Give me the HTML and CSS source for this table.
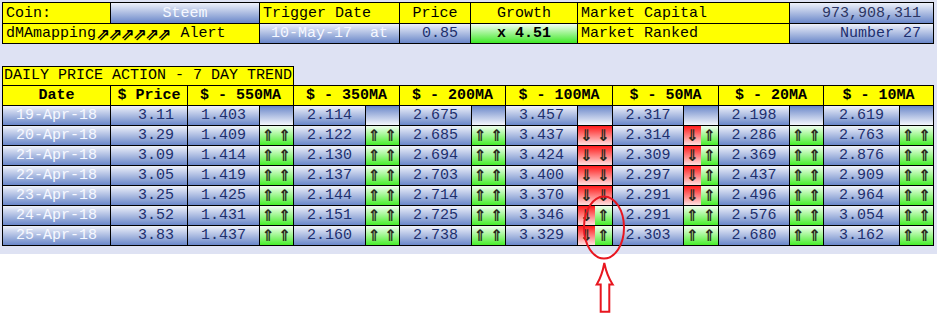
FILE: index.html
```html
<!DOCTYPE html>
<html>
<head>
<meta charset="utf-8">
<title>dMAmapping Alert - Steem</title>
<link rel="stylesheet" href="styles.css">
</head>
<body>
<div class="page">
  <div class="summary">
    <div class="cell yellow left">Coin:</div>
    <div class="cell blue light center">Steem</div>
    <div class="cell yellow left">Trigger Date</div>
    <div class="cell yellow center">Price</div>
    <div class="cell yellow center">Growth</div>
    <div class="cell yellow left">Market Capital</div>
    <div class="cell blue dark right">973,908,311</div>
    <div class="cell yellow left span2">dMAmapping<span class="sym">⇗⇗⇗⇗⇗⇗</span> Alert</div>
    <div class="cell blue light center">10-May-17  at</div>
    <div class="cell blue navy right">0.85</div>
    <div class="cell green center bold">x 4.51</div>
    <div class="cell yellow left">Market Ranked</div>
    <div class="cell blue navy right">Number 27</div>
  </div>

  <div class="title">DAILY PRICE ACTION - 7 DAY TREND</div>

  <div class="trend">
    <div class="cell yellow center bold">Date</div>
    <div class="cell yellow center bold">$ Price</div>
    <div class="cell yellow center bold span2">$ - 550MA</div>
    <div class="cell yellow center bold span2">$ - 350MA</div>
    <div class="cell yellow center bold span2">$ - 200MA</div>
    <div class="cell yellow center bold span2">$ - 100MA</div>
    <div class="cell yellow center bold span2">$ - 50MA</div>
    <div class="cell yellow center bold span2">$ - 20MA</div>
    <div class="cell yellow center bold span2">$ - 10MA</div>

    <div class="cell blue light center">19-Apr-18</div>
    <div class="cell blue navy price">3.11</div>
    <div class="cell blue navy center">1.403</div><div class="arr none"></div>
    <div class="cell blue navy center">2.114</div><div class="arr none"></div>
    <div class="cell blue navy center">2.675</div><div class="arr none"></div>
    <div class="cell blue navy center">3.457</div><div class="arr none"></div>
    <div class="cell blue navy center">2.317</div><div class="arr none"></div>
    <div class="cell blue navy center">2.198</div><div class="arr none"></div>
    <div class="cell blue navy center">2.619</div><div class="arr none"></div>

    <div class="cell blue light center">20-Apr-18</div>
    <div class="cell blue navy price">3.29</div>
    <div class="cell blue navy center">1.409</div><div class="arr"><span class="up">⇑</span><span class="up">⇑</span></div>
    <div class="cell blue navy center">2.122</div><div class="arr"><span class="up">⇑</span><span class="up">⇑</span></div>
    <div class="cell blue navy center">2.685</div><div class="arr"><span class="up">⇑</span><span class="up">⇑</span></div>
    <div class="cell blue navy center">3.437</div><div class="arr"><span class="dn">⇓</span><span class="dn">⇓</span></div>
    <div class="cell blue navy center">2.314</div><div class="arr"><span class="dn">⇓</span><span class="up">⇑</span></div>
    <div class="cell blue navy center">2.286</div><div class="arr"><span class="up">⇑</span><span class="up">⇑</span></div>
    <div class="cell blue navy center">2.763</div><div class="arr"><span class="up">⇑</span><span class="up">⇑</span></div>

    <div class="cell blue light center">21-Apr-18</div>
    <div class="cell blue navy price">3.09</div>
    <div class="cell blue navy center">1.414</div><div class="arr"><span class="up">⇑</span><span class="up">⇑</span></div>
    <div class="cell blue navy center">2.130</div><div class="arr"><span class="up">⇑</span><span class="up">⇑</span></div>
    <div class="cell blue navy center">2.694</div><div class="arr"><span class="up">⇑</span><span class="up">⇑</span></div>
    <div class="cell blue navy center">3.424</div><div class="arr"><span class="dn">⇓</span><span class="dn">⇓</span></div>
    <div class="cell blue navy center">2.309</div><div class="arr"><span class="dn">⇓</span><span class="up">⇑</span></div>
    <div class="cell blue navy center">2.369</div><div class="arr"><span class="up">⇑</span><span class="up">⇑</span></div>
    <div class="cell blue navy center">2.876</div><div class="arr"><span class="up">⇑</span><span class="up">⇑</span></div>

    <div class="cell blue light center">22-Apr-18</div>
    <div class="cell blue navy price">3.05</div>
    <div class="cell blue navy center">1.419</div><div class="arr"><span class="up">⇑</span><span class="up">⇑</span></div>
    <div class="cell blue navy center">2.137</div><div class="arr"><span class="up">⇑</span><span class="up">⇑</span></div>
    <div class="cell blue navy center">2.703</div><div class="arr"><span class="up">⇑</span><span class="up">⇑</span></div>
    <div class="cell blue navy center">3.400</div><div class="arr"><span class="dn">⇓</span><span class="dn">⇓</span></div>
    <div class="cell blue navy center">2.297</div><div class="arr"><span class="dn">⇓</span><span class="up">⇑</span></div>
    <div class="cell blue navy center">2.437</div><div class="arr"><span class="up">⇑</span><span class="up">⇑</span></div>
    <div class="cell blue navy center">2.909</div><div class="arr"><span class="up">⇑</span><span class="up">⇑</span></div>

    <div class="cell blue light center">23-Apr-18</div>
    <div class="cell blue navy price">3.25</div>
    <div class="cell blue navy center">1.425</div><div class="arr"><span class="up">⇑</span><span class="up">⇑</span></div>
    <div class="cell blue navy center">2.144</div><div class="arr"><span class="up">⇑</span><span class="up">⇑</span></div>
    <div class="cell blue navy center">2.714</div><div class="arr"><span class="up">⇑</span><span class="up">⇑</span></div>
    <div class="cell blue navy center">3.370</div><div class="arr"><span class="dn">⇓</span><span class="dn">⇓</span></div>
    <div class="cell blue navy center">2.291</div><div class="arr"><span class="dn">⇓</span><span class="up">⇑</span></div>
    <div class="cell blue navy center">2.496</div><div class="arr"><span class="up">⇑</span><span class="up">⇑</span></div>
    <div class="cell blue navy center">2.964</div><div class="arr"><span class="up">⇑</span><span class="up">⇑</span></div>

    <div class="cell blue light center">24-Apr-18</div>
    <div class="cell blue navy price">3.52</div>
    <div class="cell blue navy center">1.431</div><div class="arr"><span class="up">⇑</span><span class="up">⇑</span></div>
    <div class="cell blue navy center">2.151</div><div class="arr"><span class="up">⇑</span><span class="up">⇑</span></div>
    <div class="cell blue navy center">2.725</div><div class="arr"><span class="up">⇑</span><span class="up">⇑</span></div>
    <div class="cell blue navy center">3.346</div><div class="arr"><span class="dn">⇓</span><span class="up">⇑</span></div>
    <div class="cell blue navy center">2.291</div><div class="arr"><span class="up">⇑</span><span class="up">⇑</span></div>
    <div class="cell blue navy center">2.576</div><div class="arr"><span class="up">⇑</span><span class="up">⇑</span></div>
    <div class="cell blue navy center">3.054</div><div class="arr"><span class="up">⇑</span><span class="up">⇑</span></div>

    <div class="cell blue light center">25-Apr-18</div>
    <div class="cell blue navy price">3.83</div>
    <div class="cell blue navy center">1.437</div><div class="arr"><span class="up">⇑</span><span class="up">⇑</span></div>
    <div class="cell blue navy center">2.160</div><div class="arr"><span class="up">⇑</span><span class="up">⇑</span></div>
    <div class="cell blue navy center">2.738</div><div class="arr"><span class="up">⇑</span><span class="up">⇑</span></div>
    <div class="cell blue navy center">3.329</div><div class="arr"><span class="dn">⇓</span><span class="up">⇑</span></div>
    <div class="cell blue navy center">2.303</div><div class="arr"><span class="up">⇑</span><span class="up">⇑</span></div>
    <div class="cell blue navy center">2.680</div><div class="arr"><span class="up">⇑</span><span class="up">⇑</span></div>
    <div class="cell blue navy center">3.162</div><div class="arr"><span class="up">⇑</span><span class="up">⇑</span></div>
  </div>
</div>

<svg class="annotation" viewBox="0 0 938 320" aria-hidden="true">
  <ellipse cx="604" cy="227.5" rx="20" ry="31" fill="none" stroke="#e8161f" stroke-width="2"/>
  <path d="M604.3 263 Q607 276 612.7 284.5 L609.3 284.5 L609.3 311.7 L600.7 311.7 L600.7 284.5 L596.7 284.5 Q602 276 604.3 263 Z" fill="none" stroke="#e8161f" stroke-width="2" stroke-linejoin="miter"/>
</svg>
</body>
</html>
```

FILE: styles.css
```css
html, body {
  margin: 0;
  padding: 0;
  background: #ffffff;
}

body {
  position: relative;
  min-height: 320px;
  font-family: "Liberation Mono", "Courier New", "DejaVu Sans Mono", monospace;
  font-size: 15px;
  color: #000;
}

.page {
  width: 937px;
  box-sizing: border-box;
  padding: 2px 0 8px 2px;
  background: #dee2f3;
}

.summary {
  display: grid;
  width: max-content;
  background: #000;
  padding: 1px;
  gap: 1px;
  grid-template-columns: 107px 148px 139px 70px 106px 211px 143px;
  grid-template-rows: 20px 19px;
}

.title {
  margin-top: 22px;
  width: 292px;
  height: 19px;
  box-sizing: border-box;
  border: 1px solid #000;
  border-bottom: 0;
  background: #ffff00;
  padding-left: 1px;
  line-height: 18px;
  white-space: pre;
}

.trend {
  display: grid;
  width: max-content;
  background: #000;
  padding: 1px;
  gap: 1px;
  grid-template-columns: 107px 76px 71px 33px 71px 33px 71px 33px 71px 34px 70px 34px 70px 33px 75px 33px;
  grid-auto-rows: 19px;
}

.cell {
  display: flex;
  align-items: center;
  white-space: pre;
  overflow: hidden;
  padding: 0 3px;
}

.span2 { grid-column: span 2; }

.left { justify-content: flex-start; }
.center { justify-content: center; padding: 0; }
.right { justify-content: flex-end; padding-right: 12px; }
.price { justify-content: flex-end; padding-right: 13px; }
.bold { font-weight: bold; }

.yellow { background: #ffff00; color: #000; }
.blue { background: linear-gradient(#eef1fa, #6a87c9); }
.green { background: linear-gradient(#f4fff2, #3fe826); }

.light { color: #f6f8ff; }
.navy { color: #1d2f6e; }
.dark { color: #2c3563; }

.sym {
  font-family: "DejaVu Sans", sans-serif;
  font-size: 17px;
  font-weight: bold;
  letter-spacing: -2px;
  margin-right: 2px;
}

.arr {
  display: flex;
}

.arr span {
  flex: 1;
  display: flex;
  align-items: center;
  justify-content: center;
  font-family: "DejaVu Sans", sans-serif;
  font-size: 16px;
  font-weight: bold;
  color: #2a2a1c;
}

.up { background: linear-gradient(#f2fff0, #48ee2c); }
.dn { background: linear-gradient(#ff1a1a, #ffe0e0); color: #2a2a3a; }
.none { background: linear-gradient(#6a87c9, #f4f6fc); }

.annotation {
  position: absolute;
  left: 0;
  top: 0;
  width: 938px;
  height: 320px;
  pointer-events: none;
}
```
